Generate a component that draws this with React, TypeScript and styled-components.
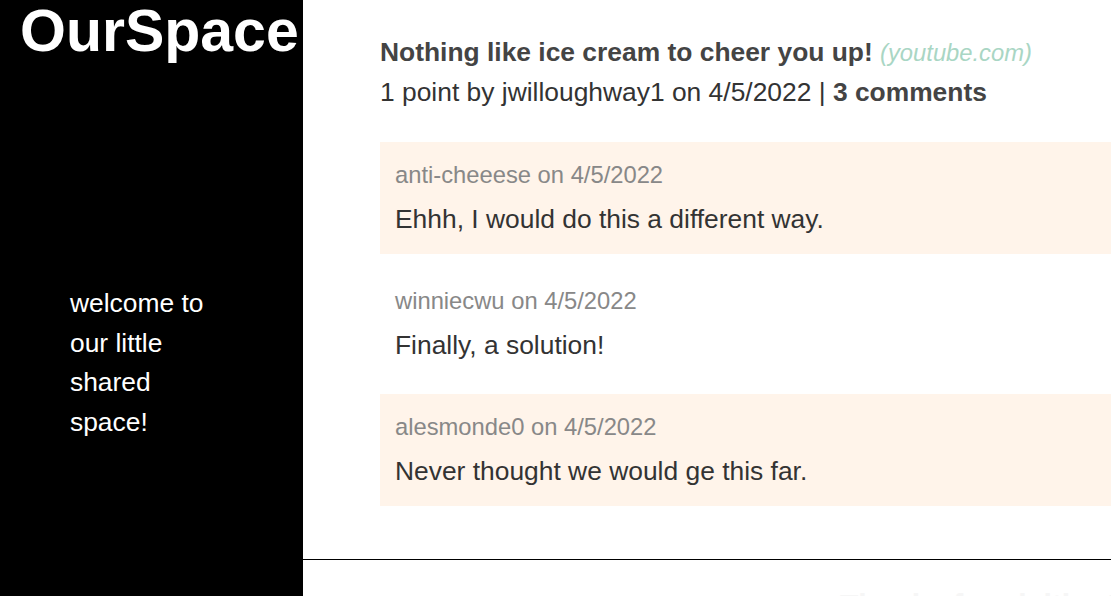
import styled, {createGlobalStyle} from "styled-components";

const GlobalStyle = createGlobalStyle`
  html, body {
    margin: 0;
    padding: 0;
    background: #fff;
    font-family: "Liberation Sans", Arial, sans-serif;
  }
`

const Page = styled.div`
  display: flex;
  min-height: 100vh;
  font-size: 26.4px;
  line-height: 1.5;
`

const Sidebar = styled.aside`
  width: 303px;
  flex-shrink: 0;
  background: #000;
  color: #fff;
  padding: 0 0 0 20px;
  box-sizing: border-box;
`

const Logo = styled.h1`
  margin: 0;
  font-size: 59px;
  font-weight: bold;
  line-height: 1;
  padding-top: 2px;
`

const Welcome = styled.p`
  margin: 223px 0 0 50px;
  max-width: 150px;
  line-height: 39.6px;
`

const Main = styled.main`
  flex: 1;
  display: flex;
  flex-direction: column;
  overflow: hidden;
`

const Content = styled.section`
  padding: 33px 0 0 77px;
`

const PostTitle = styled.div`
  color: #444;
  font-weight: bold;
  white-space: nowrap;
`

const Domain = styled.span`
  color: #a9d6c4;
  font-style: italic;
  font-weight: normal;
  font-size: 0.9em;
`

const PostMeta = styled.div`
  color: #333;
  white-space: nowrap;

  b {
    color: #444;
  }
`

const CommentList = styled.ul`
  list-style: none;
  margin: 30px 0 0;
  padding: 0;
  display: flex;
  flex-direction: column;
  gap: 14px;
`

const Comment = styled.li<{ $shaded: boolean }>`
  background: ${p => p.$shaded ? '#fff4ea' : 'transparent'};
  padding: 15px 15px 0;
  height: 112px;
  box-sizing: border-box;
`

const CommentMeta = styled.div`
  color: #888;
  font-size: 0.9em;
  margin-bottom: 7px;
`

const CommentText = styled.div`
  color: #333;
`

const Footer = styled.footer`
  margin-top: 53px;
  border-top: 1px solid #000;
  padding: 22px 0 0 537px;
  color: #f6f6f6;
  font-size: 30px;
  font-weight: bold;
  white-space: nowrap;
`

type CommentData = {
  author: string,
  date: string,
  text: string,
}

const comments: CommentData[] = [
  {author: 'anti-cheeese', date: '4/5/2022', text: 'Ehhh, I would do this a different way.'},
  {author: 'winniecwu', date: '4/5/2022', text: 'Finally, a solution!'},
  {author: 'alesmonde0', date: '4/5/2022', text: 'Never thought we would ge this far.'},
]

const App = () => {
  return (
    <>
      <GlobalStyle/>
      <Page>
        <Sidebar>
          <Logo>OurSpace</Logo>
          <Welcome>welcome to our little shared space!</Welcome>
        </Sidebar>

        <Main>
          <Content>
            <PostTitle>
              Nothing like ice cream to cheer you up! <Domain>(youtube.com)</Domain>
            </PostTitle>
            <PostMeta>
              1 point by jwilloughway1 on 4/5/2022 | <b>3 comments</b>
            </PostMeta>

            <CommentList>
              {comments.map((c, i) => (
                <Comment key={c.author} $shaded={i % 2 === 0}>
                  <CommentMeta>{c.author} on {c.date}</CommentMeta>
                  <CommentText>{c.text}</CommentText>
                </Comment>
              ))}
            </CommentList>
          </Content>

          <Footer>Thanks for visiting!</Footer>
        </Main>
      </Page>
    </>
  )
}

export default App
